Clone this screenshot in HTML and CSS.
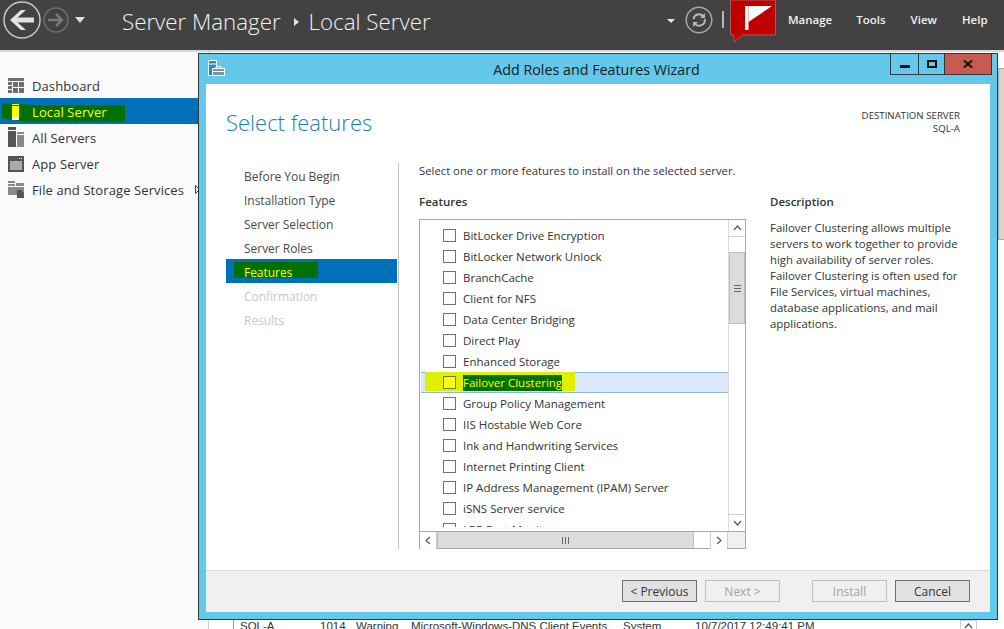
FILE: index.html
```html
<!DOCTYPE html>
<html lang="en">
<head>
    <meta charset="UTF-8">
    <title>Server Manager - Add Roles and Features Wizard</title>
    <link rel="stylesheet" href="styles.css">
</head>
<body>
    <header class="topbar">
        <div class="nav-arrows">
            <svg class="back" width="44" height="40" viewBox="0 0 44 40">
                <circle cx="22" cy="20" r="18" fill="none" stroke="#c8c8c8" stroke-width="1.500"/>
                <path d="M34 20H15" fill="none" stroke="#e2e2e2" stroke-width="5"/>
                <path d="M10 20L21 10h5l-9 8v4l9 8h-5z" fill="#e2e2e2"/>
            </svg>
            <svg class="forward" width="26" height="26" viewBox="0 0 26 26">
                <circle cx="13" cy="13" r="12" fill="none" stroke="#6e6e6e" stroke-width="1.500"/>
                <path d="M5 13h13M13 7l6 6-6 6" fill="none" stroke="#7a7a7a" stroke-width="2.500"/>
            </svg>
            <span class="caret"></span>
        </div>
        <div class="crumb">
            <span>Server Manager</span>
            <span class="crumb-sep"></span>
            <span>Local Server</span>
        </div>
        <div class="tools">
            <span class="caret small"></span>
            <svg class="refresh" width="28" height="28" viewBox="0 0 28 28">
                <circle cx="14" cy="14" r="12.800" fill="none" stroke="#a8a8a8" stroke-width="1.500"/>
                <path d="M8.500 13a5.700 5.700 0 0 1 9.800-3" fill="none" stroke="#b8b8b8" stroke-width="2"/>
                <path d="M19.800 13a5.700 5.700 0 0 1-10.100 4.500" fill="none" stroke="#b8b8b8" stroke-width="2"/>
                <path d="M20 7v5h-5zM8 21v-5h5z" fill="#b8b8b8"/>
            </svg>
            <span class="tools-sep"></span>
            <div class="flag">
                <svg width="46" height="43" viewBox="0 0 46 43">
                    <path d="M0.500 0V35H4V42L13 35H45.500V0z" fill="#c00000" stroke="#a85a5a"/>
                    <path d="M15 6h3.500v24H15z" fill="#fff"/>
                    <path d="M18.500 6H42L18.500 22z" fill="#fff"/>
                </svg>
            </div>
            <nav class="menu">
                <span>Manage</span>
                <span>Tools</span>
                <span>View</span>
                <span>Help</span>
            </nav>
        </div>
    </header>

    <div class="desktop">
        <aside class="sidebar">
            <div class="side-item">
                <svg width="16" height="16" viewBox="0 0 16 16"><path d="M0 0h16v3H0zM0 4h4v3H0zM5 4h5v5H5zM11 4h5v5h-5zM0 8h4v3H0zM0 12h4v3H0zM5 10h5v5H5zM11 10h5v5h-5z" fill="#6e6e6e"/></svg>
                <span>Dashboard</span>
            </div>
            <div class="side-item active">
                <span class="scribble side-scribble"></span>
                <svg width="16" height="16" viewBox="0 0 16 16"><path d="M4 0h7v1H4zM4 2h7v11H4z" fill="#ffff00"/><path d="M4 13h7v3H4z" fill="#fff"/></svg>
                <span class="side-label">Local Server</span>
            </div>
            <div class="side-item">
                <svg width="16" height="21" viewBox="0 0 16 21"><path d="M0 0h8v3H0zM0 4h8v16H0z" fill="#555"/><path d="M9 5h7v2H9zM9 8h7v12H9z" fill="#888"/></svg>
                <span>All Servers</span>
            </div>
            <div class="side-item">
                <svg width="16" height="16" viewBox="0 0 16 16"><path d="M0 0h16v16H0z" fill="#555"/><path d="M2 5h12v9H2z" fill="#aaa"/><path d="M11 2h1v1h-1zM13 2h1v1h-1z" fill="#eee"/></svg>
                <span>App Server</span>
            </div>
            <div class="side-item">
                <svg width="16" height="17" viewBox="0 0 16 17"><path d="M0 0h7v2H0zM8 2h8v3H8zM0 3h7v2H0zM0 6h16v6h-7v2H0z" fill="#8a8a8a"/><path d="M9 9h4l3 3v5H9z" fill="#555"/></svg>
                <span>File and Storage Services</span>
                <svg class="more" width="5" height="9" viewBox="0 0 5 9"><path d="M0.500 0.500L4.500 4.500 0.500 8.500z" fill="none" stroke="#444"/></svg>
            </div>
        </aside>
        <div class="events">
            <div class="event-row">
                <span class="ev-server">SQL-A</span>
                <span class="ev-id">1014</span>
                <span class="ev-sev">Warning</span>
                <span class="ev-src">Microsoft-Windows-DNS Client Events</span>
                <span class="ev-log">System</span>
                <span class="ev-date">10/7/2017 12:49:41 PM</span>
                <span class="ev-arrow">
                    <svg width="9" height="6" viewBox="0 0 9 6"><path d="M1 5l3.500-4L8 5" fill="none" stroke="#555" stroke-width="1.200"/></svg>
                </span>
            </div>
        </div>
        <div class="page-scroll"><span></span></div>
    </div>

    <section class="wizard">
        <div class="titlebar">
            <svg class="wiz-icon" width="17" height="17" viewBox="0 0 17 17">
                <path d="M0.500 0.500h8v15h-8zM0.500 4h8" fill="#1f8fd0" stroke="#fff"/>
                <path d="M4.500 8.500h12v7h-12z" fill="#7c93a8" stroke="#fff"/>
                <path d="M8 8.500V6.500h5v2M4.500 11.500h12" fill="none" stroke="#fff"/>
            </svg>
            <span class="wiz-title">Add Roles and Features Wizard</span>
            <div class="win-buttons">
                <button class="win-btn min"><i></i></button>
                <button class="win-btn max"><i></i></button>
                <button class="win-btn close">
                    <svg width="10" height="8" viewBox="0 0 10 8"><path d="M1 0.500l8 7M9 0.500l-8 7" stroke="#111" stroke-width="2"/></svg>
                </button>
            </div>
        </div>
        <div class="wiz-body">
            <div class="wiz-main">
                <div class="wiz-head">
                    <h1>Select features</h1>
                    <div class="dest">DESTINATION SERVER<br>SQL-A</div>
                </div>
                <div class="wiz-cols">
                    <ul class="steps">
                        <li>Before You Begin</li>
                        <li>Installation Type</li>
                        <li>Server Selection</li>
                        <li>Server Roles</li>
                        <li class="current"><span class="scribble step-scribble"></span><span class="step-label">Features</span></li>
                        <li class="off">Confirmation</li>
                        <li class="off">Results</li>
                    </ul>
                    <div class="pane">
                        <p class="intro">Select one or more features to install on the selected server.</p>
                        <div class="pane-cols">
                            <div class="features">
                                <h2>Features</h2>
                                <div class="listbox">
                                    <div class="list-top">
                                        <ul class="list">
                                            <li><i class="check"></i>BitLocker Drive Encryption</li>
                                            <li><i class="check"></i>BitLocker Network Unlock</li>
                                            <li><i class="check"></i>BranchCache</li>
                                            <li><i class="check"></i>Client for NFS</li>
                                            <li><i class="check"></i>Data Center Bridging</li>
                                            <li><i class="check"></i>Direct Play</li>
                                            <li><i class="check"></i>Enhanced Storage</li>
                                            <li class="picked"><span class="marker"></span><i class="check"></i><span class="picked-text">Failover Clustering</span></li>
                                            <li><i class="check"></i>Group Policy Management</li>
                                            <li><i class="check"></i>IIS Hostable Web Core</li>
                                            <li><i class="check"></i>Ink and Handwriting Services</li>
                                            <li><i class="check"></i>Internet Printing Client</li>
                                            <li><i class="check"></i>IP Address Management (IPAM) Server</li>
                                            <li><i class="check"></i>iSNS Server service</li>
                                            <li><i class="check"></i>LPR Port Monitor</li>
                                        </ul>
                                        <div class="vscroll">
                                            <span class="arrow">
                                                <svg width="9" height="6" viewBox="0 0 9 6"><path d="M1 5l3.500-4L8 5" fill="none" stroke="#555" stroke-width="1.200"/></svg>
                                            </span>
                                            <span class="vthumb"><b></b></span>
                                            <span class="arrow end">
                                                <svg width="9" height="6" viewBox="0 0 9 6"><path d="M1 1l3.500 4L8 1" fill="none" stroke="#555" stroke-width="1.200"/></svg>
                                            </span>
                                        </div>
                                    </div>
                                    <div class="hscroll">
                                        <span class="arrow">
                                            <svg width="6" height="9" viewBox="0 0 6 9"><path d="M5 1L1 4.500 5 8" fill="none" stroke="#555" stroke-width="1.200"/></svg>
                                        </span>
                                        <span class="hthumb"><b></b></span>
                                        <span class="arrow end">
                                            <svg width="6" height="9" viewBox="0 0 6 9"><path d="M1 1l4 3.500L1 8" fill="none" stroke="#555" stroke-width="1.200"/></svg>
                                        </span>
                                        <span class="corner"></span>
                                    </div>
                                </div>
                            </div>
                            <div class="description">
                                <h2>Description</h2>
                                <p>Failover Clustering allows multiple servers to work together to provide high availability of server roles. Failover Clustering is often used for File Services, virtual machines, database applications, and mail applications.</p>
                            </div>
                        </div>
                    </div>
                </div>
            </div>
            <footer class="wiz-foot">
                <button class="btn">&lt; Previous</button>
                <button class="btn disabled">Next &gt;</button>
                <button class="btn disabled install">Install</button>
                <button class="btn">Cancel</button>
            </footer>
        </div>
    </section>
</body>
</html>
```

FILE: styles.css
```css
* {
    box-sizing: border-box;
}

html, body {
    margin: 0;
    height: 100%;
}

body {
    position: relative;
    width: 1004px;
    height: 629px;
    overflow: hidden;
    font-family: "Open Sans", "Noto Sans", sans-serif;
    font-size: 12px;
    color: #333;
    background-color: #fff;
    display: flex;
    flex-direction: column;
}

ul {
    list-style: none;
    margin: 0;
    padding: 0;
}

/* top bar */
.topbar {
    height: 52px;
    flex: none;
    display: flex;
    align-items: flex-start;
    background-color: #424242;
    border-bottom: 2px solid #d8d8d8;
}

.nav-arrows {
    width: 122px;
    height: 50px;
    display: flex;
    align-items: flex-start;
}

.nav-arrows .forward {
    margin: 7px 0 0 -1px;
}

.caret {
    width: 0;
    height: 0;
    margin: 17px 0 0 6px;
    border-left: 5px solid transparent;
    border-right: 5px solid transparent;
    border-top: 6px solid #e0e0e0;
}

.caret.small {
    margin: 19px 10px 0 0;
    border-left-width: 4px;
    border-right-width: 4px;
    border-top-width: 4px;
    border-top-color: #e6e6e6;
}

.crumb {
    height: 43px;
    display: flex;
    align-items: center;
    font-size: 22.300px;
    font-weight: 300;
    color: #f2f2f2;
}

.crumb-sep {
    width: 0;
    height: 0;
    margin: 0 10px 0 13px;
    border-top: 4px solid transparent;
    border-bottom: 4px solid transparent;
    border-left: 5px solid #e6e6e6;
}

.tools {
    margin-left: auto;
    display: flex;
    align-items: flex-start;
    height: 50px;
}

.refresh {
    margin-top: 6px;
}

.tools-sep {
    width: 2px;
    height: 17px;
    margin: 11px 6px 0 9px;
    background-color: #b5b5b5;
}

.flag {
    width: 46px;
    height: 43px;
}

.menu {
    display: flex;
    margin-left: 12px;
    padding-top: 12px;
    width: 216px;
    font-size: 11.500px;
    font-weight: 600;
    color: #f0f0f0;
    gap: 24px;
}

.menu span:nth-child(3) {
    margin-left: 1px;
}

.menu span:nth-child(4) {
    margin-left: 1px;
}

/* area behind the wizard */
.desktop {
    flex: 1;
    display: flex;
    min-height: 0;
}

.sidebar {
    width: 209px;
    flex: none;
    padding-top: 20px;
    background-color: #fafafa;
    border-right: 1px solid #cfcfcf;
}

.side-item {
    position: relative;
    height: 26px;
    padding: 1px 0 0 8px;
    display: flex;
    align-items: center;
    gap: 8px;
    font-size: 13px;
    letter-spacing: 0.100px;
    color: #333;
    white-space: nowrap;
}

.side-item.active {
    background-color: #0070b8;
    color: #ffff00;
}

.side-item svg,
.side-label {
    position: relative;
}

.side-item .more {
    margin-left: 3px;
}

.scribble {
    position: absolute;
    background-color: #007000;
}

.side-scribble {
    left: 2px;
    top: 5px;
    width: 123px;
    height: 19px;
    clip-path: polygon(0 0, 30% 12%, 100% 12%, 100% 100%, 20% 100%, 0 80%);
}

.events {
    flex: 1;
    min-width: 0;
    display: flex;
    flex-direction: column;
    justify-content: flex-end;
}

.event-row {
    height: 9px;
    margin-left: 24px;
    padding-left: 6px;
    display: flex;
    font-family: "Liberation Sans", sans-serif;
    font-size: 11.500px;
    line-height: 13px;
    white-space: nowrap;
    overflow: hidden;
    border-left: 1px solid #999;
}

.ev-server { width: 80px; }
.ev-id { width: 36px; }
.ev-sev { width: 55px; }
.ev-src { width: 212px; }
.ev-log { width: 72px; }
.ev-date { width: 265px; }

.ev-arrow {
    width: 17px;
    height: 9px;
    flex: none;
    display: flex;
    justify-content: center;
    padding-top: 2px;
    border: 1px solid #cfcfcf;
    border-bottom: none;
}

.page-scroll {
    width: 6px;
    flex: none;
    padding-top: 16px;
}

.page-scroll span {
    display: block;
    height: 172px;
    background-color: #d4d4d4;
    border: 1px solid #aaa;
    border-right: none;
}

/* wizard window, floats over the server manager */
.wizard {
    position: absolute;
    left: 198px;
    top: 53px;
    width: 800px;
    height: 567px;
    background-color: #63c8ea;
    border: 1px solid #2e3a40;
    padding: 0 7px 7px;
    display: flex;
    flex-direction: column;
}

.titlebar {
    position: relative;
    height: 30px;
    flex: none;
    display: flex;
    align-items: center;
    justify-content: center;
}

.wiz-icon {
    position: absolute;
    left: 2px;
    top: 6px;
}

.wiz-title {
    font-size: 14.300px;
    color: #1a1a1a;
    margin-right: 3px;
}

.win-buttons {
    position: absolute;
    right: -2px;
    top: 0;
    display: flex;
    height: 21px;
    border: 1px solid #2e3a40;
    border-top: none;
}

.win-btn {
    padding: 0;
    border: none;
    border-right: 1px solid #2e3a40;
    background-color: #63c8ea;
    display: flex;
    align-items: center;
    justify-content: center;
}

.win-btn.min {
    width: 28px;
}

.win-btn.min i {
    display: block;
    width: 10px;
    height: 3px;
    margin-top: 5px;
    background-color: #111;
}

.win-btn.max {
    width: 26px;
}

.win-btn.max i {
    display: block;
    width: 10px;
    height: 8px;
    border: 2px solid #111;
}

.win-btn.close {
    width: 46px;
    border-right: none;
    background-color: #c75b50;
}

.wiz-body {
    flex: 1;
    min-height: 0;
    display: flex;
    flex-direction: column;
    background-color: #fff;
}

.wiz-main {
    flex: 1;
    min-height: 0;
    padding: 0 20px;
}

.wiz-head {
    height: 79px;
    position: relative;
    padding-top: 21px;
}

.wiz-head h1 {
    margin: 0;
    font-size: 22px;
    font-weight: 300;
    line-height: 34px;
    color: #1d7fa8;
}

.dest {
    position: absolute;
    right: 10px;
    top: 25px;
    text-align: right;
    font-size: 9.700px;
    line-height: 13px;
    color: #333;
}

.wiz-cols {
    display: flex;
    height: 386px;
}

.steps {
    width: 172px;
    flex: none;
    font-size: 12px;
    letter-spacing: -0.030px;
}

.steps li {
    position: relative;
    height: 24px;
    margin-right: 1px;
    line-height: 28px;
    padding-left: 18px;
    color: #4a4a4a;
}

.steps li.current {
    background-color: #0070b8;
    color: #ffff00;
}

.steps li.off {
    color: #c8c8c8;
}

.step-label {
    position: relative;
}

.step-scribble {
    left: 8px;
    top: 3px;
    width: 84px;
    height: 16px;
}

.pane {
    flex: 1;
    min-width: 0;
    border-left: 1px solid #c4c4c4;
    padding-left: 20px;
}

.intro {
    margin: 0;
    height: 29px;
    line-height: 16px;
    font-size: 11.300px;
}

.pane-cols {
    display: flex;
    gap: 24px;
}

.features {
    width: 327px;
    flex: none;
}

.pane-cols h2 {
    margin: 0;
    height: 27px;
    line-height: 20px;
    font-size: 11.500px;
    font-weight: 600;
    color: #333;
}

.listbox {
    height: 330px;
    border: 1px solid #a8a8a8;
    display: flex;
    flex-direction: column;
}

.list-top {
    flex: 1;
    min-height: 0;
    display: flex;
}

/* the last row is cut off above the scrollbar */
.list {
    flex: 1;
    height: 307px;
    overflow: hidden;
    padding-top: 5px;
    font-size: 11.500px;
}

.list li {
    position: relative;
    height: 21px;
    padding-left: 23px;
    display: flex;
    align-items: center;
    white-space: nowrap;
}

.check {
    position: relative;
    width: 13px;
    height: 13px;
    flex: none;
    margin-right: 7px;
    border: 1px solid #707070;
    background-color: #fff;
}

.list li.picked {
    margin-left: 1px;
    padding-left: 22px;
    background-color: #dbe9fb;
    border-top: 1px solid #8fb7e6;
    border-bottom: 1px solid #8fb7e6;
}

.picked .check {
    background-color: #ffff00;
}

.marker {
    position: absolute;
    left: 4px;
    top: -1px;
    width: 150px;
    height: 19px;
    background-color: #e0ee00;
}

.picked-text {
    position: relative;
    background-color: #007000;
    color: #ffff00;
    line-height: 16px;
}

.vscroll {
    width: 17px;
    flex: none;
    display: flex;
    flex-direction: column;
    border-left: 1px solid #dcdcdc;
}

.arrow {
    height: 17px;
    width: 17px;
    flex: none;
    display: flex;
    align-items: center;
    justify-content: center;
    background-color: #fff;
    border-bottom: 1px solid #cfcfcf;
}

.vscroll .arrow {
    width: 16px;
}

.vscroll .arrow.end {
    margin-top: auto;
    border-bottom: none;
    border-top: 1px solid #cfcfcf;
}

.vthumb {
    height: 72px;
    margin-top: 15px;
    display: flex;
    align-items: center;
    justify-content: center;
    background-color: #dcdcdc;
    border: 1px solid #bdbdbd;
}

.vthumb b {
    width: 7px;
    height: 7px;
    border-top: 1px solid #666;
    border-bottom: 1px solid #666;
    background: linear-gradient(#666, #666) center / 100% 1px no-repeat;
}

.hscroll {
    height: 17px;
    flex: none;
    display: flex;
    border-top: 1px solid #a8a8a8;
}

.hscroll .arrow {
    border-bottom: none;
    border-right: 1px solid #cfcfcf;
}

.hscroll .arrow.end {
    margin-left: auto;
    border-right: none;
    border-left: 1px solid #cfcfcf;
}

.hthumb {
    width: 257px;
    display: flex;
    align-items: center;
    justify-content: center;
    background-color: #dcdcdc;
    border: 1px solid #bdbdbd;
    border-width: 0 1px;
}

.hthumb b {
    width: 7px;
    height: 7px;
    border-left: 1px solid #666;
    border-right: 1px solid #666;
    background: linear-gradient(#666, #666) center / 1px 100% no-repeat;
}

.corner {
    width: 18px;
    flex: none;
    background-color: #f0f0f0;
    border-left: 1px solid #cfcfcf;
}

.description {
    width: 196px;
}

.description p {
    margin: 0;
    padding-top: 1px;
    line-height: 16px;
    font-size: 11.400px;
}

.wiz-foot {
    height: 42px;
    flex: none;
    padding: 9px 20px 0 0;
    display: flex;
    justify-content: flex-end;
    gap: 8px;
    background-color: #f0f0f0;
    border-top: 1px solid #dcdcdc;
}

.btn {
    width: 75px;
    height: 22px;
    padding: 0;
    font-family: inherit;
    font-size: 12px;
    color: #333;
    background-color: #e1e1e1;
    border: 1px solid #707070;
}

.btn.disabled {
    color: #a0a0a0;
    background-color: #f0f0f0;
    border-color: #bfbfbf;
}

.btn.install {
    margin-left: 24px;
}
```
